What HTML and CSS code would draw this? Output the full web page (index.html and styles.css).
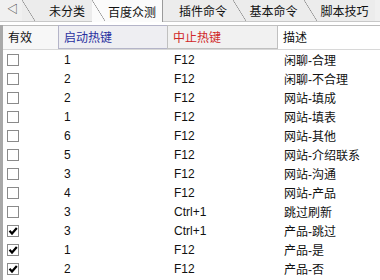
FILE: index.html
```html
<!DOCTYPE html>
<html lang="zh-CN">
<head>
  <meta charset="UTF-8">
  <title>热键列表</title>
  <link rel="stylesheet" href="styles.css">
</head>
<body>

  <!-- Tab strip -->
  <div class="tabs">
    <span class="tab-arrow">&#9665;</span>
    <span class="tab first">未分类</span>
    <span class="tab active">百度众测</span>
    <span class="tab after-active">插件命令</span>
    <span class="tab">基本命令</span>
    <span class="tab">脚本技巧</span>
  </div>

  <!-- Hotkey list -->
  <div class="list">
    <div class="head">
      <div class="cell h-on">有效</div>
      <div class="cell h-start">启动热键</div>
      <div class="cell h-stop">中止热键</div>
      <div class="cell h-desc">描述</div>
    </div>
    <div id="rows"></div>
  </div>

  <script>
    const rows = [
      [false, '1', 'F12', '闲聊-合理'],
      [false, '2', 'F12', '闲聊-不合理'],
      [false, '2', 'F12', '网站-填成'],
      [false, '1', 'F12', '网站-填表'],
      [false, '6', 'F12', '网站-其他'],
      [false, '5', 'F12', '网站-介绍联系'],
      [false, '3', 'F12', '网站-沟通'],
      [false, '4', 'F12', '网站-产品'],
      [false, '3', 'Ctrl+1', '跳过刷新'],
      [true, '3', 'Ctrl+1', '产品-跳过'],
      [true, '1', 'F12', '产品-是'],
      [true, '2', 'F12', '产品-否']
    ];

    const tick = '<svg width="10" height="10" viewBox="0 0 10 10"><path d="M1.5 4.8 L4 7.5 L8.8 2" fill="none" stroke="#000" stroke-width="2.2"/></svg>';

    document.getElementById('rows').innerHTML = rows.map(r => `
      <div class="row">
        <div class="cell"><span class="box">${r[0] ? tick : ''}</span></div>
        <div class="cell">${r[1]}</div>
        <div class="cell">${r[2]}</div>
        <div class="cell">${r[3]}</div>
      </div>`).join('');
  </script>

</body>
</html>
```

FILE: styles.css
```css
/* General styles */
body {
  margin: 0;
  font-family: "Liberation Sans", "Noto Sans CJK SC", sans-serif;
  font-size: 12px;
  color: #111;
  background-color: #ffffff;
  width: 380px;
  height: 280px;
  overflow: hidden;
}

/* Tab strip */
.tabs {
  display: flex;
  align-items: stretch;
  height: 21px;
  background-color: #f0f0f0;
  border-bottom: 1px solid #c8c8c8;
}

.tab-arrow {
  width: 22px;
  padding-left: 7px;
  box-sizing: border-box;
  line-height: 19px;
  font-size: 11px;
  color: #333;
}

.tab {
  position: relative;
  display: flex;
  align-items: center;
  justify-content: center;
  width: 71px;
  padding-left: 10px;
  box-sizing: border-box;
  background-color: #ececec;
}

.tab::before {
  content: "";
  position: absolute;
  left: 0;
  top: 0;
  width: 13px;
  height: 21px;
  background: linear-gradient(to top right, transparent calc(50% - 0.6px), #8a8a8a 50%, transparent calc(50% + 0.6px));
}

.tab.first {
  width: 70px;
  padding-left: 20px;
}

.tab.active {
  background-color: #fbfbfb;
  border-right: 1px solid #9a9a9a;
  height: 22px;
  z-index: 1;
}

.tab.after-active {
  width: 70px;
}

.tab.after-active::before {
  display: none;
}

/* Hotkey list */
.list {
  margin-top: 3px;
  border-left: 3px solid #a8a8a8;
  height: 260px;
}

.head, .row {
  display: grid;
  grid-template-columns: 55px 110px 110px 1fr;
}

.head {
  height: 23px;
  border-top: 1px solid #bcbcbc;
  border-bottom: 1px solid #d8d8d8;
}

.head .cell {
  line-height: 22px;
  padding-left: 5px;
  font-family: "Noto Sans CJK SC", sans-serif;
}

.h-on {
  background-color: #f7f7f7;
}

.h-start {
  background-color: #eeeef2;
  border: 1px solid #b4b4c8;
  margin-top: -1px;
  color: #2830a0;
}

.h-stop {
  background-color: #f1f1f1;
  border: 1px solid #c0c0c0;
  margin-top: -1px;
  margin-left: -1px;
  color: #d02828;
}

.h-desc {
  background-color: #ffffff;
}

.row {
  height: 19px;
}

.row .cell {
  display: flex;
  align-items: center;
  padding-left: 6px;
}

.row .cell:first-child {
  padding-left: 4px;
}

.box {
  display: flex;
  align-items: center;
  justify-content: center;
  width: 10px;
  height: 10px;
  border: 1px solid #8a8a8a;
  background-color: #ffffff;
}
```
